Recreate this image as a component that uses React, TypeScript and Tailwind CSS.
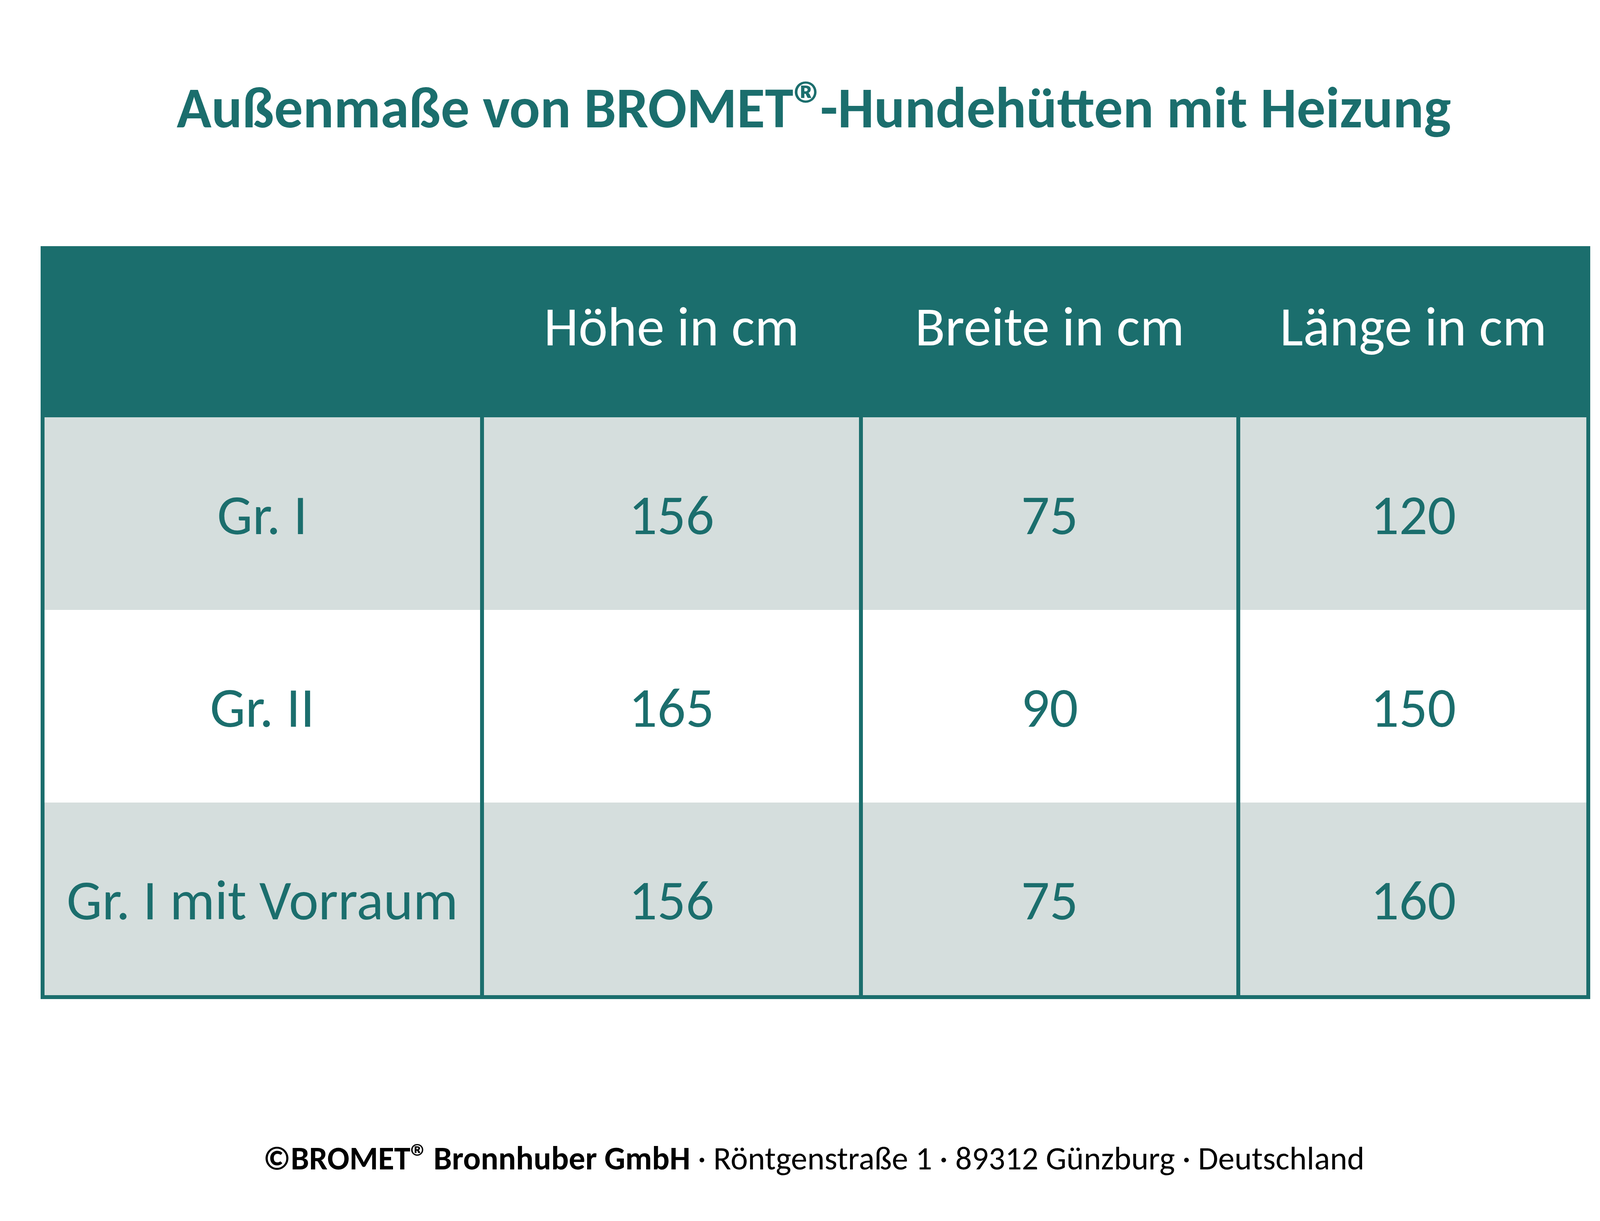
const rows = [
  { name: "Gr. I", h: "156", b: "75", l: "120", shade: true },
  { name: "Gr. II", h: "165", b: "90", l: "150", shade: false },
  { name: "Gr. I mit Vorraum", h: "156", b: "75", l: "160", shade: true },
];

const heads = ["", "Höhe in cm", "Breite in cm", "Länge in cm"];

const cols = "grid grid-cols-[1115px_970px_966px_896px]";

export default function App() {
  return (
    <div className="flex h-[3125px] w-[4167px] flex-col bg-white font-[Carlito,Calibri,Lato,sans-serif]">
      <h1 className="h-[630px] pt-[202px] text-center text-[147px] font-bold leading-none text-[#1b6e6d]">
        Außenmaße von BROMET<span className="text-[1.15em] leading-[0] tracking-[-0.1em]">®</span>-Hundehütten mit Heizung
      </h1>

      <div className="ml-[104px] w-[3967px] border-x-[10px] border-b-[10px] border-[#1b6e6d]">
        <div className={`${cols} h-[438px] bg-[#1b6e6d]`}>
          {heads.map((t, i) => (
            <div
              key={i}
              className={`flex items-center justify-center pb-[26px] text-[142px] leading-none text-white ${i > 0 ? "border-l-[10px] border-[#1b6e6d]" : ""}`}
            >
              {t}
            </div>
          ))}
        </div>
        {rows.map((r) => (
          <div key={r.name} className={`${cols} h-[493px] ${r.shade ? "bg-[#d5dedd]" : "bg-white"}`}>
            {[r.name, r.h, r.b, r.l].map((t, i) => (
              <div
                key={i}
                className={`flex items-center justify-center pt-[6px] text-[144px] leading-none text-[#1b6e6d] ${i > 0 ? "border-l-[10px] border-[#1b6e6d]" : ""}`}
              >
                {t}
              </div>
            ))}
          </div>
        ))}
      </div>

      <p className="pt-[366px] text-center text-[84px] leading-none text-black">
        <span className="font-bold">
          ©BROMET<span className="text-[1.12em] leading-[0] tracking-[-0.08em]">®</span> Bronnhuber GmbH
        </span>{" "}
        · Röntgenstraße 1 · 89312 Günzburg · Deutschland
      </p>
    </div>
  );
}
